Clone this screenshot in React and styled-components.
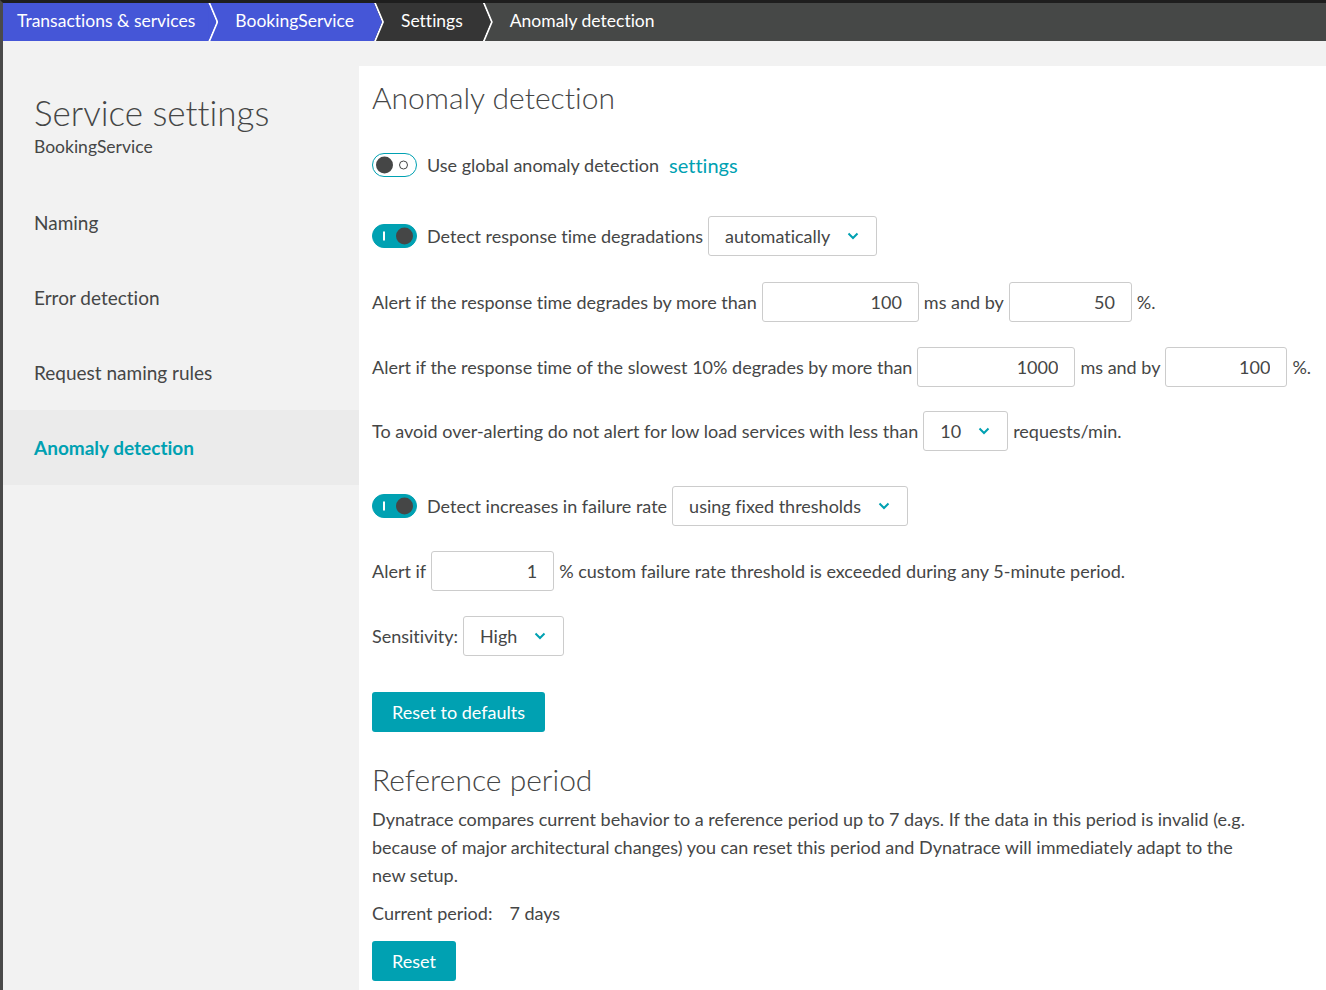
import React from 'react';
import styled, { createGlobalStyle, css } from 'styled-components';

const teal = '#00a1b2';
const text = '#454646';

const GlobalStyle = createGlobalStyle`
  body {
    margin: 0;
    font-family: Lato, "Noto Sans", sans-serif;
    font-variant-ligatures: none;
    color: ${text};
    background: #f2f2f2;
  }
  * { box-sizing: border-box; }
`;

const Shell = styled.div`
  min-height: 100vh;
  border-top: 3px solid #1e1e1e;
  border-left: 3px solid #4a4a4a;
  display: flex;
  flex-direction: column;
`;

const TopBar = styled.nav`
  display: flex;
  height: 38px;
  background: #464847;
`;

const Crumb = styled.div`
  position: relative;
  display: flex;
  align-items: center;
  padding: 0 20px 3px 27px;
  font-size: 17.5px;
  color: #fff;
  background: ${({ $bg }) => $bg};

  ${({ $first }) => $first && css`
    padding: 0 13px 3px 14px;
  `}

  ${({ $last, $bg }) => !$last && css`
    &::before {
      content: '';
      position: absolute;
      top: 0;
      right: -10px;
      width: 10px;
      height: 100%;
      background: #fff;
      clip-path: polygon(0 0, 2px 0, 10px 50%, 2px 100%, 0 100%, 8px 50%);
      z-index: 1;
    }
    &::after {
      content: '';
      position: absolute;
      top: 0;
      right: -8px;
      width: 8px;
      height: 100%;
      background: ${$bg};
      clip-path: polygon(0 0, 100% 50%, 0 100%);
      z-index: 1;
    }
  `}
`;

const Body = styled.div`
  flex: 1;
  display: flex;
`;

const Sidebar = styled.aside`
  width: 356px;
  flex-shrink: 0;
  padding-top: 51px;
`;

const SideTitle = styled.h1`
  margin: 0 0 4px 31px;
  font-size: 35px;
  line-height: 40px;
  font-weight: 300;
`;

const SideSub = styled.div`
  margin: 0 0 27px 31px;
  font-size: 17.5px;
  line-height: 22px;
`;

const NavItem = styled.div`
  height: 75px;
  display: flex;
  align-items: center;
  padding-left: 31px;
  font-size: 19px;

  ${({ $active }) => $active && css`
    background: #ebebeb;
    color: ${teal};
    font-weight: 700;
  `}
`;

const Main = styled.main`
  flex: 1;
  margin-top: 25px;
  background: #fff;
  padding: 13px 13px 20px;
  font-size: 18px;
`;

const Heading = styled.h2`
  margin: ${({ $mt }) => $mt || 0}px 0 0;
  font-size: 30px;
  line-height: 36px;
  font-weight: 300;
`;

const Row = styled.div`
  display: flex;
  align-items: center;
  gap: 5px;
  height: 40px;
  margin-top: ${({ $mt }) => $mt}px;
  white-space: nowrap;
`;

const Link = styled.a`
  margin-left: 5px;
  color: ${teal};
  font-size: 20px;
  text-decoration: none;
`;

const ToggleTrack = styled.span`
  position: relative;
  display: inline-block;
  width: 45px;
  height: 24px;
  border-radius: 12px;
  margin-right: 5px;
  flex-shrink: 0;
  background: ${({ $on }) => ($on ? teal : '#fff')};
  border: 1.5px solid ${teal};
`;

const Knob = styled.span`
  position: absolute;
  top: 50%;
  width: 17px;
  height: 17px;
  border-radius: 50%;
  background: ${text};
  transform: translateY(-50%);
  ${({ $on }) => ($on ? css`right: 3px;` : css`left: 3px;`)}
`;

const OnMark = styled.span`
  position: absolute;
  left: 10px;
  top: 50%;
  width: 1.5px;
  height: 9px;
  background: #fff;
  transform: translateY(-50%);
`;

const OffMark = styled.span`
  position: absolute;
  right: 8px;
  top: 50%;
  width: 9px;
  height: 9px;
  border-radius: 50%;
  border: 1.5px solid ${text};
  transform: translateY(-50%);
`;

const Toggle = ({ on }) => (
  <ToggleTrack $on={on}>
    {on ? <OnMark /> : <OffMark />}
    <Knob $on={on} />
  </ToggleTrack>
);

const SelectBox = styled.div`
  display: inline-flex;
  align-items: center;
  gap: 17px;
  height: 40px;
  padding: 0 17px 0 16px;
  border: 1px solid #ccc;
  border-radius: 3px;
  background: #fff;
  cursor: pointer;
`;

const Chevron = () => (
  <svg width="12" height="8" viewBox="0 0 12 8">
    <path d="M1.5 1.5 L6 6 L10.5 1.5" fill="none" stroke={teal} strokeWidth="2" />
  </svg>
);

const Select = ({ children }) => (
  <SelectBox>
    <span>{children}</span>
    <Chevron />
  </SelectBox>
);

const NumberInput = styled.input`
  width: ${({ $w }) => $w}px;
  height: 40px;
  padding: 0 16px;
  border: 1px solid #ccc;
  border-radius: 3px;
  font: inherit;
  font-size: 18px;
  color: ${text};
  text-align: right;
  outline: none;
`;

const Button = styled.button`
  display: block;
  height: 40px;
  padding: 0 20px;
  margin-top: ${({ $mt }) => $mt}px;
  border: none;
  border-radius: 3px;
  background: ${teal};
  color: #fff;
  font: inherit;
  font-size: 18px;
  cursor: pointer;
`;

const Paragraph = styled.p`
  margin: 8px 0 0;
  max-width: 885px;
  line-height: 28px;
`;

const PeriodLine = styled.div`
  display: flex;
  gap: 17px;
  margin-top: 13px;
  line-height: 22px;
`;

const crumbs = [
  { label: 'Transactions & services', bg: '#4556d7' },
  { label: 'BookingService', bg: '#4556d7' },
  { label: 'Settings', bg: '#353535' },
  { label: 'Anomaly detection', bg: '#464847' },
];

const nav = ['Naming', 'Error detection', 'Request naming rules', 'Anomaly detection'];

export default function App() {
  return (
    <>
      <GlobalStyle />
      <Shell>
        <TopBar>
          {crumbs.map((c, i) => (
            <Crumb key={c.label} $bg={c.bg} $first={i === 0} $last={i === crumbs.length - 1}>
              {c.label}
            </Crumb>
          ))}
        </TopBar>
        <Body>
          <Sidebar>
            <SideTitle>Service settings</SideTitle>
            <SideSub>BookingService</SideSub>
            {nav.map((n) => (
              <NavItem key={n} $active={n === 'Anomaly detection'}>{n}</NavItem>
            ))}
          </Sidebar>
          <Main>
            <Heading>Anomaly detection</Heading>

            <Row $mt={30}>
              <Toggle on={false} />
              Use global anomaly detection
              <Link href="#">settings</Link>
            </Row>

            <Row $mt={31}>
              <Toggle on />
              Detect response time degradations
              <Select>automatically</Select>
            </Row>

            <Row $mt={26}>
              Alert if the response time degrades by more than
              <NumberInput $w={157} defaultValue="100" />
              ms and by
              <NumberInput $w={123} defaultValue="50" />
              %.
            </Row>

            <Row $mt={25}>
              Alert if the response time of the slowest 10% degrades by more than
              <NumberInput $w={158} defaultValue="1000" />
              ms and by
              <NumberInput $w={122} defaultValue="100" />
              %.
            </Row>

            <Row $mt={24}>
              To avoid over-alerting do not alert for low load services with less than
              <Select>10</Select>
              requests/min.
            </Row>

            <Row $mt={35}>
              <Toggle on />
              Detect increases in failure rate
              <Select>using fixed thresholds</Select>
            </Row>

            <Row $mt={25}>
              Alert if
              <NumberInput $w={123} defaultValue="1" />
              % custom failure rate threshold is exceeded during any 5-minute period.
            </Row>

            <Row $mt={25}>
              Sensitivity:
              <Select>High</Select>
            </Row>

            <Button $mt={36}>Reset to defaults</Button>

            <Heading $mt={29}>Reference period</Heading>
            <Paragraph>
              Dynatrace compares current behavior to a reference period up to 7 days. If the data in this period is invalid (e.g. because of major architectural changes) you can reset this period and Dynatrace will immediately adapt to the new setup.
            </Paragraph>
            <PeriodLine>
              <span>Current period:</span>
              <span>7 days</span>
            </PeriodLine>
            <Button $mt={17}>Reset</Button>
          </Main>
        </Body>
      </Shell>
    </>
  );
}
